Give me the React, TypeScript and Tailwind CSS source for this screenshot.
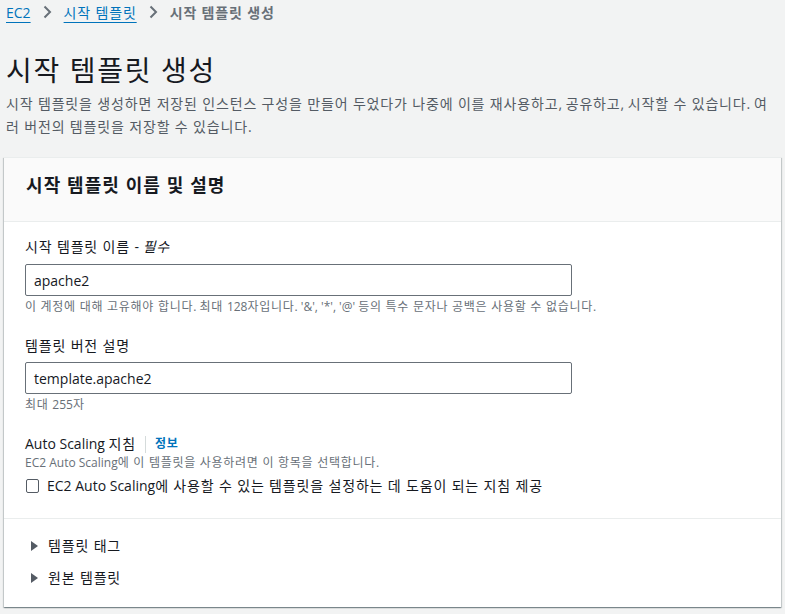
import React from "react";

function ko(text: string) {
  const parts = text.split(/([\uAC00-\uD7A3][\uAC00-\uD7A3 ]*)/);
  return parts.map((p, i) =>
    /[\uAC00-\uD7A3]/.test(p) ? (
      <span key={i} className="tracking-[0.06em]">
        {p}
      </span>
    ) : (
      <React.Fragment key={i}>{p}</React.Fragment>
    )
  );
}

function Chevron() {
  return (
    <svg width="9" height="14" viewBox="0 0 9 14" className="mx-[12px]">
      <path d="M1.5 1.5 L7 7 L1.5 12.5" fill="none" stroke="#687078" strokeWidth="2" />
    </svg>
  );
}

function Caret() {
  return (
    <svg width="7" height="10" viewBox="0 0 7 10" className="ml-[6px] mr-[10px]">
      <path d="M0 0 L7 5 L0 10 Z" fill="#545b64" />
    </svg>
  );
}

export default function App() {
  return (
    <div
      className="min-h-[614px] w-[785px] bg-[#f2f3f3] text-[#16191f]"
      style={{ fontFamily: '"Open Sans", "Noto Sans CJK KR", sans-serif' }}
    >
      <div className="px-[6px]">
        <div className="flex h-6 items-center text-[14px]">
          <span className="text-[#0073bb] underline underline-offset-[4px] decoration-1">EC2</span>
          <Chevron />
          <span className="text-[#0073bb] underline underline-offset-[4px] decoration-1">{ko("시작 템플릿")}</span>
          <Chevron />
          <span className="font-bold text-[#687078]">{ko("시작 템플릿 생성")}</span>
        </div>
        <h1 className="mt-[28px] text-[28px] leading-[36px] font-normal">{ko("시작 템플릿 생성")}</h1>
        <p className="mt-[4px] text-[14px] leading-[23px] text-[#545b64]">
          {ko(
            "시작 템플릿을 생성하면 저장된 인스턴스 구성을 만들어 두었다가 나중에 이를 재사용하고, 공유하고, 시작할 수 있습니다. 여러 버전의 템플릿을 저장할 수 있습니다."
          )}
        </p>
      </div>

      <div className="mx-[4px] mt-[19px] border-t border-[#eaeded] bg-white shadow-[0_1px_1px_0_rgba(0,28,36,0.3),1px_1px_1px_0_rgba(0,28,36,0.15),-1px_1px_1px_0_rgba(0,28,36,0.15)]">
        <div className="border-b border-[#eaeded] bg-[#fafafa] px-[22px] pt-[15px] pb-[24px]">
          <h2 className="text-[18px] leading-6 font-bold">{ko("시작 템플릿 이름 및 설명")}</h2>
        </div>

        <div className="border-b border-[#eaeded] px-[21px] pt-[15px] pb-[22px]">
          <div className="text-[14px] leading-5">
            {ko("시작 템플릿 이름 - ")}
            <i>{ko("필수")}</i>
          </div>
          <div className="mt-[7px] flex h-[32px] w-[547px] items-center rounded-[2px] border border-[#687078] px-[8px] text-[14px]">
            apache2
          </div>
          <div className="mt-[3px] text-[12px] leading-4 text-[#687078]">
            {ko(
              "이 계정에 대해 고유해야 합니다. 최대 128자입니다. '&', '*', '@' 등의 특수 문자나 공백은 사용할 수 없습니다."
            )}
          </div>

          <div className="mt-[21px] text-[14px] leading-5">{ko("템플릿 버전 설명")}</div>
          <div className="mt-[6px] flex h-[32px] w-[547px] items-center rounded-[2px] border border-[#687078] px-[8px] text-[14px]">
            template.apache2
          </div>
          <div className="mt-[3px] text-[12px] leading-4 text-[#687078]">{ko("최대 255자")}</div>

          <div className="mt-[21px] flex items-center text-[14px] leading-5">
            <span>{ko("Auto Scaling 지침")}</span>
            <span className="mx-[9px] h-[17px] w-px bg-[#d5dbdb]" />
            <span className="text-[12px] font-bold text-[#0073bb]">{ko("정보")}</span>
          </div>
          <div className="mt-[1px] text-[12px] leading-4 text-[#687078]">
            {ko("EC2 Auto Scaling에 이 템플릿을 사용하려면 이 항목을 선택합니다.")}
          </div>
          <div className="mt-[5px] flex items-center text-[14px] leading-5">
            <span className="ml-[1px] mr-[8px] h-[14px] w-[13px] rounded-[2px] border border-[#545b64] bg-white" />
            <span>{ko("EC2 Auto Scaling에 사용할 수 있는 템플릿을 설정하는 데 도움이 되는 지침 제공")}</span>
          </div>
        </div>

        <div className="px-[21px] pt-[17px] pb-[19px] text-[14px] leading-5 text-[#16191f]">
          <div className="flex items-center">
            <Caret />
            <span>{ko("템플릿 태그")}</span>
          </div>
          <div className="mt-[12px] flex items-center">
            <Caret />
            <span>{ko("원본 템플릿")}</span>
          </div>
        </div>
      </div>
    </div>
  );
}
